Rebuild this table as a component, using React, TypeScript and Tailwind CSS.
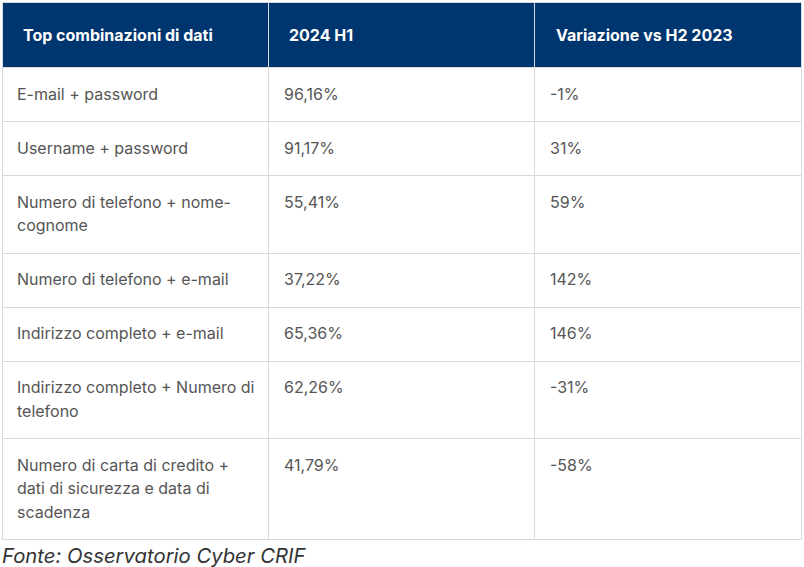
const rows: [string, string, string][] = [
  ['E-mail + password', '96,16%', '-1%'],
  ['Username + password', '91,17%', '31%'],
  ['Numero di telefono + nome-cognome', '55,41%', '59%'],
  ['Numero di telefono + e-mail', '37,22%', '142%'],
  ['Indirizzo completo + e-mail', '65,36%', '146%'],
  ['Indirizzo completo + Numero di telefono', '62,26%', '-31%'],
  ['Numero di carta di credito + dati di sicurezza e data di scadenza', '41,79%', '-58%'],
];

export default function App() {
  return (
    <div className="min-h-[567px] bg-white pl-[2px] pt-[2px] font-['Inter','Liberation_Sans',sans-serif]">
      <table className="w-[800px] table-fixed border-collapse border border-[#d9d9d9]">
        <thead>
          <tr className="h-[65px] bg-[#003670] text-left">
            <th className="w-[266px] border border-[#d9d9d9] pl-[20px] text-[16px] font-bold text-white">
              Top combinazioni di dati
            </th>
            <th className="w-[266px] border border-[#d9d9d9] pl-[20px] text-[16px] font-bold text-white">
              2024 H1
            </th>
            <th className="w-[267px] border border-[#d9d9d9] pl-[21px] text-[16px] font-bold text-white">
              Variazione vs H2 2023
            </th>
          </tr>
        </thead>
        <tbody>
          {rows.map(([a, b, c]) => (
            <tr key={a} className="align-top text-[16px] leading-[23.5px] text-[#555555]">
              <td className="border border-[#d9d9d9] pb-[15px] pl-[14px] pr-[10px] pt-[14.5px]">{a}</td>
              <td className="border border-[#d9d9d9] pb-[15px] pl-[15px] pt-[14.5px]">{b}</td>
              <td className="border border-[#d9d9d9] pb-[15px] pl-[15px] pt-[14.5px]">{c}</td>
            </tr>
          ))}
        </tbody>
      </table>
      <p className="mt-[4px] text-[20.3px] italic leading-6 text-[#333333]">Fonte: Osservatorio Cyber CRIF</p>
    </div>
  );
}
